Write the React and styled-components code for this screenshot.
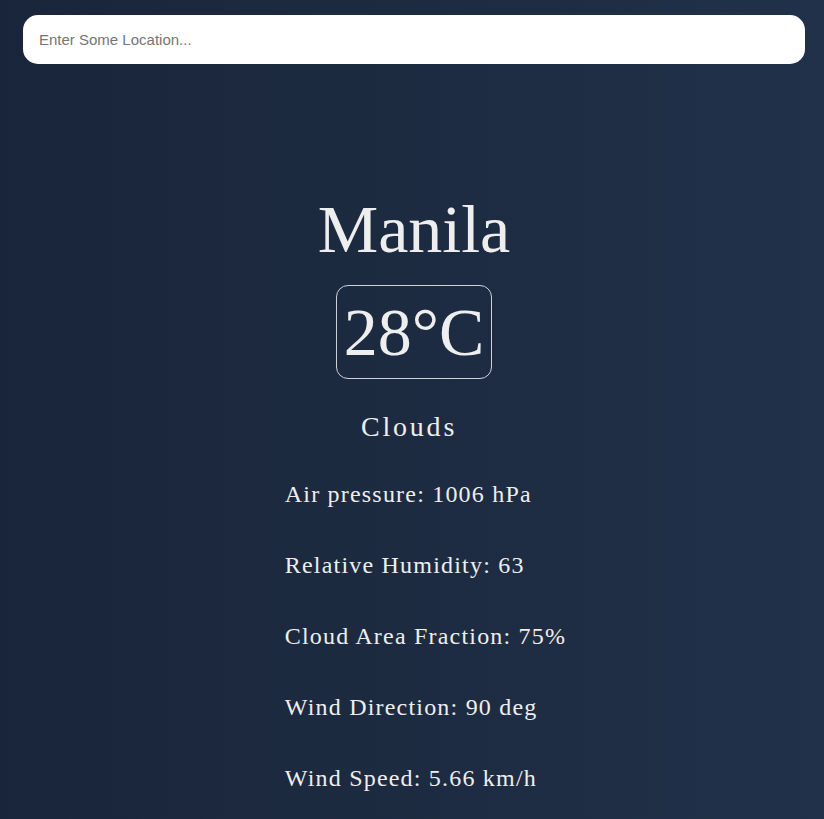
import React from "react";
import styled, { createGlobalStyle } from "styled-components";

const GlobalStyle = createGlobalStyle`
  html, body {
    margin: 0;
    padding: 0;
  }
  body {
    min-height: 819px;
    background: linear-gradient(to right, #19253a, #213149);
    font-family: "Liberation Serif", "Times New Roman", serif;
    color: #eeeeee;
  }
`;

const details = [
  "Air pressure: 1006 hPa",
  "Relative Humidity: 63",
  "Cloud Area Fraction: 75%",
  "Wind Direction: 90 deg",
  "Wind Speed: 5.66 km/h",
];

const App = () => {
  const [location, setLocation] = React.useState("");
  return (
    <>
      <GlobalStyle />
      <Page>
        <SearchInput
          autoFocus
          value={location}
          onChange={(e) => setLocation(e.target.value)}
          placeholder="Enter Some Location..."
        />
        <Weather>
          <City>Manila</City>
          <Temp>28°C</Temp>
          <Condition>Clouds</Condition>
          <Details>
            {details.map((item) => (
              <Detail key={item}>{item}</Detail>
            ))}
          </Details>
        </Weather>
      </Page>
    </>
  );
};

const Page = styled.div`
  padding: 15px 19px 0 23px;
  display: flex;
  flex-direction: column;
`;

const SearchInput = styled.input`
  box-sizing: border-box;
  width: 100%;
  height: 49px;
  border: none;
  outline: none;
  border-radius: 15px;
  background: #ffffff;
  padding: 0 16px;
  font-family: "Liberation Sans", Arial, sans-serif;
  font-size: 15px;
  color: #222;
  caret-color: #000;

  &::placeholder {
    color: #757575;
  }
`;

const Weather = styled.div`
  display: flex;
  flex-direction: column;
  align-items: center;
  margin-top: 128px;
`;

const City = styled.h1`
  margin: 0;
  font-size: 68px;
  font-weight: normal;
  line-height: 75px;
`;

const Temp = styled.div`
  margin-top: 18px;
  padding: 8px 7px;
  border: 1px solid #cfd3d9;
  border-radius: 12px;
  font-size: 68px;
  line-height: 76px;
`;

const Condition = styled.div`
  margin-top: 32px;
  padding-right: 10px;
  font-size: 28px;
  letter-spacing: 0.1em;
  line-height: 32px;
`;

const Details = styled.div`
  margin-top: 38px;
  padding-left: 23px;
  display: flex;
  flex-direction: column;
  gap: 44px;
`;

const Detail = styled.p`
  margin: 0;
  font-size: 24px;
  letter-spacing: 0.05em;
  line-height: 27px;
  white-space: nowrap;
`;

export default App;
